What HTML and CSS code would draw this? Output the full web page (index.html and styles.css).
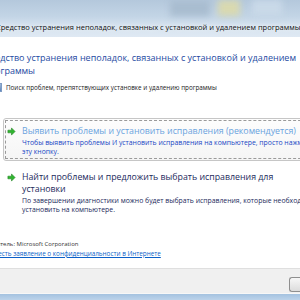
FILE: index.html
```html
<!DOCTYPE html>
<html lang="ru">
<head>
    <meta charset="UTF-8">
    <title>Средство устранения неполадок</title>
    <link rel="stylesheet" href="styles.css">
</head>
<body>
    <div class="window">
        <div class="glass">
            <div class="glass-blur">
                <span class="blob blob-gray"></span>
                <span class="blob blob-yellow"></span>
                <span class="blob blob-light"></span>
            </div>
            <div class="title-row">Средство устранения неполадок, связанных с установкой и удалением программы</div>
        </div>

        <div class="content">
            <h1 class="main-title">Средство устранения неполадок, связанных с установкой и удалением<br>программы</h1>

            <div class="task">
                <span class="task-icon"></span>
                <span>Поиск проблем, препятствующих установке и удалению программы</span>
            </div>

            <div class="command-link active">
                <div class="focus">
                    <svg class="arrow" width="9" height="9" viewBox="0 0 10 10">
                        <path d="M1 3.5h4V1l4 4-4 4V6.5H1z" fill="#2fb52f" stroke="#1c7d1c" stroke-width="0.6"/>
                    </svg>
                    <div class="link-text">
                        <div class="link-title">Выявить проблемы и установить исправления (рекомендуется)</div>
                        <div class="link-note">Чтобы выявить проблемы И установить исправления на компьютере, просто нажмите<br>эту кнопку.</div>
                    </div>
                </div>
            </div>

            <div class="command-link">
                <div class="focus">
                    <svg class="arrow" width="9" height="9" viewBox="0 0 10 10">
                        <path d="M1 3.5h4V1l4 4-4 4V6.5H1z" fill="#2fb52f" stroke="#1c7d1c" stroke-width="0.6"/>
                    </svg>
                    <div class="link-text">
                        <div class="link-title">Найти проблемы и предложить выбрать исправления для<br>установки</div>
                        <div class="link-note">По завершении диагностики можно будет выбрать исправления, которые необходимо<br>установить на компьютере.</div>
                    </div>
                </div>
            </div>

            <div class="publisher">Издатель: Microsoft Corporation</div>
            <a class="privacy" href="#">Прочесть заявление о конфиденциальности в Интернете</a>
        </div>

        <div class="footer">
            <span class="footer-button"></span>
        </div>
        <div class="frame-bottom"></div>
    </div>
</body>
</html>
```

FILE: styles.css
```css
body {
    margin: 0;
    background-color: #ffffff;
    font-family: "Open Sans", "Noto Sans", sans-serif;
}

.window {
    width: 300px;
    height: 300px;
    overflow: hidden;
    display: flex;
    flex-direction: column;
    background-color: #ffffff;
}

.glass {
    height: 37px;
    background: linear-gradient(to bottom, #b4c8dc 0%, #c3d5e6 45%, #d6e3ef 70%, #dfe9f3 100%);
    overflow: hidden;
    flex-shrink: 0;
}

.glass-blur {
    height: 20px;
    display: flex;
    filter: blur(3px);
}

.blob {
    display: block;
    height: 16px;
}

.blob-gray {
    width: 40px;
    margin-left: 170px;
    background-color: #a9bdd0;
}

.blob-yellow {
    width: 22px;
    margin-left: 8px;
    background-color: #d9d9b0;
}

.blob-light {
    width: 30px;
    margin-left: 12px;
    background-color: #c9d9e8;
}

.title-row {
    font-size: 7.5px;
    line-height: 14px;
    color: #111111;
    margin-left: -4px;
    white-space: nowrap;
    text-shadow: 0 0 4px #ffffff;
}

.content {
    flex: 1;
    min-height: 0;
    overflow: hidden;
    display: flex;
    flex-direction: column;
    align-items: flex-start;
    padding-top: 14px;
}

.main-title {
    margin: 0 0 0 -16px;
    font-size: 9px;
    line-height: 13px;
    font-weight: normal;
    color: #1e4aa2;
    white-space: nowrap;
}

.task {
    display: flex;
    align-items: center;
    gap: 4px;
    margin: 6px 0 0 -11px;
    font-size: 6.3px;
    line-height: 9px;
    color: #222222;
    white-space: nowrap;
}

.task-icon {
    width: 13px;
    height: 9px;
    background: linear-gradient(to bottom, #9db8d8, #5d86bd);
    border: 1px solid #7f9cc4;
    box-sizing: border-box;
}

.command-link {
    width: 310px;
    margin-left: 3px;
    padding: 1px;
    border: 1px solid transparent;
    border-radius: 3px;
    box-sizing: border-box;
    flex-shrink: 0;
}

.command-link.active {
    margin-top: 26px;
    border-color: #c6c6c6;
    background: linear-gradient(to bottom, #fdfdfd, #f5f5f5);
}

.command-link + .command-link {
    margin-top: 3px;
}

.focus {
    display: flex;
    align-items: flex-start;
    gap: 6px;
    padding: 4px 3px 2px 1px;
    border: 1px dashed transparent;
}

.active .focus {
    border-color: #9a9a9a;
}

.arrow {
    margin-top: 2px;
    flex-shrink: 0;
}

.link-title {
    font-size: 8.8px;
    line-height: 12px;
    color: #1c2a5c;
    white-space: nowrap;
}

.active .link-title {
    color: #6aa3de;
}

.link-note {
    margin-top: 1px;
    font-size: 6.85px;
    line-height: 9px;
    color: #1c2a5c;
    white-space: nowrap;
}

.active .link-note {
    color: #1846c4;
}

.publisher {
    margin: 20px 0 0 -14px;
    font-size: 6px;
    line-height: 10px;
    color: #333333;
    white-space: nowrap;
}

.privacy {
    margin-left: -18px;
    font-size: 6.35px;
    line-height: 10px;
    color: #0a5fc8;
    white-space: nowrap;
}

.footer {
    height: 16px;
    flex-shrink: 0;
    display: flex;
    justify-content: flex-end;
    align-items: flex-start;
    padding-top: 8px;
    background-color: #f0f0f0;
    border-top: 1px solid #dfdfdf;
    border-bottom: 1px solid #f7f7f7;
}

.footer-button {
    width: 10px;
    height: 13px;
    border: 1px solid #8f8f8f;
    border-right: none;
    border-radius: 3px 0 0 3px;
    background: linear-gradient(to bottom, #f7f7f7, #dcdcdc);
}

.frame-bottom {
    height: 6px;
    flex-shrink: 0;
    background: linear-gradient(to bottom, #a4c2e0, #bcd3ea);
}
```
